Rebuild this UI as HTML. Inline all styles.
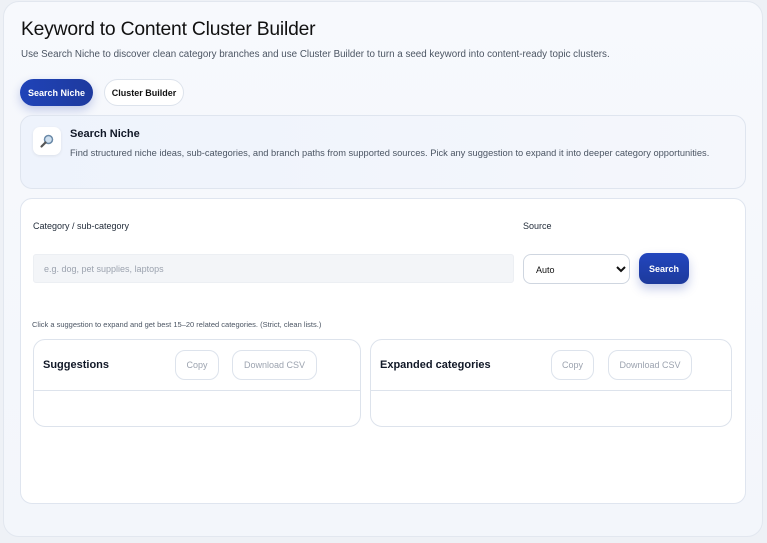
<!DOCTYPE html>
<html><head><style>
*{box-sizing:border-box;margin:0;padding:0}
body{width:767px;height:543px;background:#eef1f6;font-family:"Liberation Sans",sans-serif;position:relative;overflow:hidden;color:#111827}
.a{position:absolute}
.card{left:3px;top:1px;width:760px;height:536px;border-radius:16px;background:linear-gradient(180deg,#f7f9fd,#f3f6fb);border:1px solid #e2e7ef}
h1{position:absolute;left:21px;top:19px;font-size:19.3px;font-weight:400;letter-spacing:-0.2px;color:#111}
.sub{left:21px;top:49px;font-size:9.8px;color:#4b5563}
.pill{border-radius:14px;font-size:9px;font-weight:700;display:flex;align-items:center;justify-content:center}
.info{left:20px;top:115px;width:726px;height:74px;border:1px solid #dfe5ef;border-radius:12px;background:linear-gradient(90deg,#eef3fc,#f5f7fc)}
.main{left:20px;top:198px;width:726px;height:306px;border:1px solid #dfe5ef;border-radius:12px;background:#fff}
.lbl{font-size:9px;color:#1f2937}
.box{border:1px solid #dde3ec;border-radius:12px;background:#fff}
.btn{border:1px solid #dde3ec;border-radius:10px;font-size:9px;color:#9ca3af;display:flex;align-items:center;justify-content:center;background:#fff}
.bt{font-size:11px;font-weight:700}
</style></head><body>
<div class="a card"></div>
<h1>Keyword to Content Cluster Builder</h1>
<div class="a sub">Use Search Niche to discover clean category branches and use Cluster Builder to turn a seed keyword into content-ready topic clusters.</div>
<div class="a pill" style="left:20px;top:79px;width:73px;height:27px;background:linear-gradient(90deg,#1f43b8,#1e3a9e);color:#fff;box-shadow:0 4px 10px rgba(30,60,170,.25)">Search Niche</div>
<div class="a pill" style="left:104px;top:79px;width:80px;height:27px;background:#fff;border:1px solid #dde3ec;color:#111">Cluster Builder</div>
<div class="a info"></div>
<div class="a" style="left:33px;top:127px;width:28px;height:28px;background:#fff;border-radius:7px;box-shadow:0 1px 3px rgba(0,0,0,.08)">
<svg width="28" height="28" viewBox="0 0 28 28"><circle cx="15.5" cy="12.5" r="4" fill="#cfe0f0" stroke="#6b8aa8" stroke-width="1.5"/><line x1="12.5" y1="15.5" x2="8.5" y2="19.5" stroke="#555" stroke-width="2.2" stroke-linecap="round"/></svg></div>
<div class="a" style="left:70px;top:128px;font-size:11px;font-weight:700">Search Niche</div>
<div class="a" style="left:70px;top:148px;font-size:9.3px;color:#4b5563">Find structured niche ideas, sub-categories, and branch paths from supported sources. Pick any suggestion to expand it into deeper category opportunities.</div>
<div class="a main"></div>
<div class="a lbl" style="left:33px;top:221px">Category / sub-category</div>
<div class="a lbl" style="left:523px;top:221px">Source</div>
<div class="a" style="left:33px;top:254px;width:481px;height:29px;background:#f3f5f8;border:1px solid #eceff3;border-radius:3px;font-size:9px;color:#9ca3af;padding:9px 10px">e.g. dog, pet supplies, laptops</div>
<div class="a" style="left:523px;top:254px;width:107px;height:30px;border:1px solid #cfd6e0;border-radius:8px;background:#fff;font-size:9px;color:#111;padding:10px 12px">Auto
<svg class="a" style="left:92px;top:10px" width="10" height="9" viewBox="0 0 10 9"><path d="M1 2l4 4 4-4" stroke="#111" stroke-width="2" fill="none"/></svg></div>
<div class="a pill" style="left:639px;top:253px;width:50px;height:31px;border-radius:9px;background:linear-gradient(180deg,#2346be,#1d3a9c);color:#fff;box-shadow:0 5px 10px rgba(30,60,170,.25)">Search</div>
<div class="a" style="left:32px;top:320px;font-size:7.5px;color:#4b5563">Click a suggestion to expand and get best 15–20 related categories. (Strict, clean lists.)</div>
<div class="a box" style="left:33px;top:339px;width:328px;height:88px"></div>
<div class="a" style="left:34px;top:390px;width:326px;height:1px;background:#dde3ec"></div>
<div class="a bt" style="left:43px;top:359px">Suggestions</div>
<div class="a btn" style="left:175px;top:350px;width:44px;height:30px">Copy</div>
<div class="a btn" style="left:232px;top:350px;width:85px;height:30px">Download CSV</div>
<div class="a box" style="left:370px;top:339px;width:362px;height:88px"></div>
<div class="a" style="left:371px;top:390px;width:360px;height:1px;background:#dde3ec"></div>
<div class="a bt" style="left:380px;top:359px">Expanded categories</div>
<div class="a btn" style="left:551px;top:350px;width:43px;height:30px">Copy</div>
<div class="a btn" style="left:608px;top:350px;width:84px;height:30px">Download CSV</div>
</body></html>
